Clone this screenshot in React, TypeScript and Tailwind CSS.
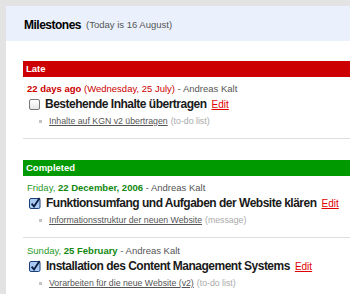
const font = { fontFamily: '"Liberation Sans", Arial, sans-serif' };

type Item = {
  date: React.ReactNode;
  title: string;
  done: boolean;
  link: string;
  kind: string;
};

function CheckIcon({ done }: { done: boolean }) {
  if (!done) {
    return (
      <span className="inline-block w-[11px] h-[11px] rounded-[2px] border border-[#777] bg-gradient-to-b from-white to-[#e6e6e6] shrink-0" />
    );
  }
  return (
    <svg width="12" height="12" viewBox="0 0 12 12" className="shrink-0 overflow-visible">
      <rect x="0.5" y="1.5" width="10.5" height="10" rx="1.5" fill="#a9cbf2" stroke="#1d3f78" />
      <path d="M2.6 6.6 L5 9.4 L10.6 1" fill="none" stroke="#0d1f40" strokeWidth="1.8" />
    </svg>
  );
}

function Milestone({ item, last }: { item: Item; last?: boolean }) {
  return (
    <div className={`pt-[6px] pb-[11px] pl-[4px] ${last ? "" : "border-b border-[#dddddd] mb-[1px]"}`}>
      <div className="text-[9.5px] leading-[12px] text-[#555] whitespace-nowrap">{item.date}</div>
      <div className="flex items-center gap-[5px] pl-[2px] mt-[1px] whitespace-nowrap">
        <CheckIcon done={item.done} />
        <span className="text-[12px] leading-[16px] font-bold text-[#1a1a1a] tracking-[-0.5px]">{item.title}</span>
        <a className="text-[10px] text-[#e00000] underline">Edit</a>
      </div>
      <div className="flex items-center text-[8.75px] leading-[12px] pl-[12px] mt-[3px] whitespace-nowrap">
        <span className="w-[3px] h-[3px] bg-[#c4c4c4] mr-[7px]" />
        <a className="text-[#555] underline">{item.link}</a>
        <span className="text-[#aaa] ml-[3px]">({item.kind})</span>
      </div>
    </div>
  );
}

export default function App() {
  return (
    <div className="w-[350px] h-[294px] bg-[#e3e3e3] pl-[6px] pt-[6px] overflow-hidden" style={font}>
      <div className="bg-white h-full">
        <div className="bg-[#eaf1fc] h-[35px] flex items-center pl-[18px] pt-[3px]">
          <span className="text-[12px] font-bold text-black tracking-[-0.5px]">Milestones</span>
          <span className="text-[9.5px] text-[#555] ml-[5px]">(Today is 16 August)</span>
        </div>
        <div className="pl-[17px] pt-[20px]">
          <div className="bg-[#cc0000] h-[16px] flex items-center pl-[3px] text-white text-[9.5px] font-bold">Late</div>
          <Milestone
            item={{
              date: (
                <span className="text-[#cc0000]">
                  <b>22 days ago</b> (Wednesday, 25 July) <span className="text-[#555]">- Andreas Kalt</span>
                </span>
              ),
              title: "Bestehende Inhalte übertragen",
              done: false,
              link: "Inhalte auf KGN v2 übertragen",
              kind: "to-do list",
            }}
          />
          <div className="h-[20px]" />
          <div className="bg-[#009900] h-[16px] flex items-center pl-[3px] text-white text-[9.5px] font-bold">Completed</div>
          <Milestone
            item={{
              date: (
                <span className="text-[#2a9a2a]">
                  Friday, <b className="text-[#118811]">22 December, 2006</b> <span className="text-[#555]">- Andreas Kalt</span>
                </span>
              ),
              title: "Funktionsumfang und Aufgaben der Website klären",
              done: true,
              link: "Informationsstruktur der neuen Website",
              kind: "message",
            }}
          />
          <Milestone
            last
            item={{
              date: (
                <span className="text-[#2a9a2a]">
                  Sunday, <b className="text-[#118811]">25 February</b> <span className="text-[#555]">- Andreas Kalt</span>
                </span>
              ),
              title: "Installation des Content Management Systems",
              done: true,
              link: "Vorarbeiten für die neue Website (v2)",
              kind: "to-do list",
            }}
          />
        </div>
      </div>
    </div>
  );
}
